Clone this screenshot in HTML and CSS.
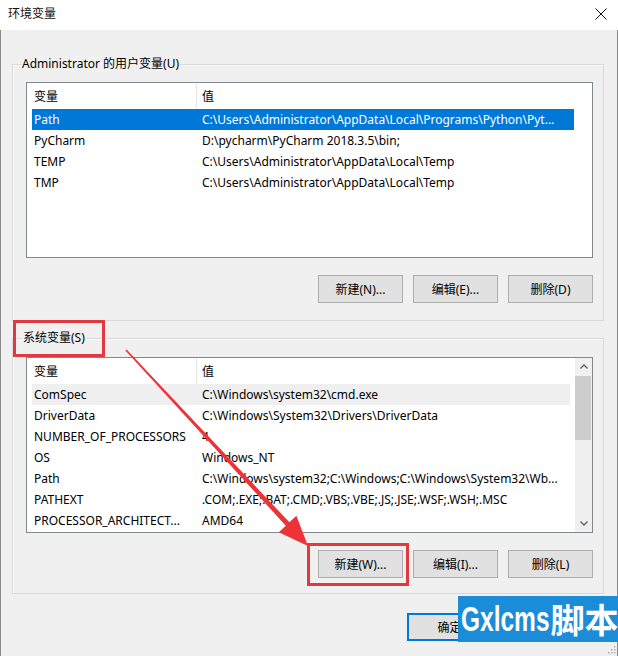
FILE: index.html
```html
<!DOCTYPE html>
<html lang="zh-CN">
<head>
<meta charset="utf-8">
<title>环境变量</title>
<link rel="stylesheet" href="styles.css">
</head>
<body>
<div class="window">
  <div class="titlebar">
    <span class="title">环境变量</span>
    <svg class="close" width="12" height="12" viewBox="0 0 12 12"><path d="M0.5 0.5 L11.5 11.5 M11.5 0.5 L0.5 11.5" stroke="#111" stroke-width="1" fill="none"/></svg>
  </div>
  <div class="content">
    <div class="group group-user">
      <span class="group-label">Administrator 的用户变量(U)</span>
      <div class="list">
        <div class="list-body">
          <div class="list-head"><span class="hcol1">变量</span><span class="hcol2">值</span></div>
          <div class="row selected"><span class="c1">Path</span><span class="c2">C:\Users\Administrator\AppData\Local\Programs\Python\Pyt...</span></div>
          <div class="row"><span class="c1">PyCharm</span><span class="c2">D:\pycharm\PyCharm 2018.3.5\bin;</span></div>
          <div class="row"><span class="c1">TEMP</span><span class="c2">C:\Users\Administrator\AppData\Local\Temp</span></div>
          <div class="row"><span class="c1">TMP</span><span class="c2">C:\Users\Administrator\AppData\Local\Temp</span></div>
        </div>
      </div>
      <div class="btns">
        <button class="btn">新建(N)...</button>
        <button class="btn">编辑(E)...</button>
        <button class="btn">删除(D)</button>
      </div>
    </div>

    <div class="group group-sys">
      <span class="group-label sys-label">系统变量(S)</span>
      <div class="list">
        <div class="list-body">
          <div class="list-head"><span class="hcol1">变量</span><span class="hcol2">值</span></div>
          <div class="row sys hot"><span class="c1">ComSpec</span><span class="c2">C:\Windows\system32\cmd.exe</span></div>
          <div class="row sys"><span class="c1">DriverData</span><span class="c2">C:\Windows\System32\Drivers\DriverData</span></div>
          <div class="row sys"><span class="c1">NUMBER_OF_PROCESSORS</span><span class="c2">4</span></div>
          <div class="row sys"><span class="c1">OS</span><span class="c2">Windows_NT</span></div>
          <div class="row sys"><span class="c1">Path</span><span class="c2">C:\Windows\system32;C:\Windows;C:\Windows\System32\Wb...</span></div>
          <div class="row sys"><span class="c1">PATHEXT</span><span class="c2">.COM;.EXE;.BAT;.CMD;.VBS;.VBE;.JS;.JSE;.WSF;.WSH;.MSC</span></div>
          <div class="row sys"><span class="c1">PROCESSOR_ARCHITECT...</span><span class="c2">AMD64</span></div>
        </div>
        <div class="scrollbar">
          <div class="sb-btn"><svg width="8" height="5" viewBox="0 0 8 5"><path d="M0.5 4.5 L4 1 L7.5 4.5" stroke="#606060" stroke-width="1.3" fill="none"/></svg></div>
          <div class="sb-thumb"></div>
          <div class="sb-space"></div>
          <div class="sb-btn"><svg width="8" height="5" viewBox="0 0 8 5"><path d="M0.5 0.5 L4 4 L7.5 0.5" stroke="#606060" stroke-width="1.3" fill="none"/></svg></div>
        </div>
      </div>
      <div class="btns">
        <button class="btn">新建(W)...</button>
        <button class="btn">编辑(I)...</button>
        <button class="btn">删除(L)</button>
      </div>
    </div>

    <div class="dialog-btns">
      <button class="btn default">确定</button>
      <button class="btn">取消</button>
    </div>
  </div>

  <div class="mark mark-label"></div>
  <div class="mark mark-new"></div>
  <svg class="arrow" width="618" height="656" viewBox="0 0 618 656">
    <polygon fill="#ee3338" points="125.4,350.5 285.8,525.7 278.8,532.2 308,546 296.4,515.8 289.4,522.3 126.6,349.5"/>
  </svg>
  <div class="watermark"><span class="wm-latin">Gxlcms</span><span class="wm-cjk">脚本</span></div>
  <svg class="grip" width="10" height="10" viewBox="0 0 10 10">
    <rect x="8" y="2" width="1.5" height="1.5" fill="#b0b0b0"/>
    <rect x="5" y="5" width="1.5" height="1.5" fill="#b0b0b0"/>
    <rect x="8" y="5" width="1.5" height="1.5" fill="#b0b0b0"/>
    <rect x="2" y="8" width="1.5" height="1.5" fill="#b0b0b0"/>
    <rect x="5" y="8" width="1.5" height="1.5" fill="#b0b0b0"/>
    <rect x="8" y="8" width="1.5" height="1.5" fill="#b0b0b0"/>
  </svg>
</div>
</body>
</html>
```
FILE: styles.css
```css
* { box-sizing: border-box; }
html, body { margin: 0; padding: 0; }
body {
  width: 618px;
  height: 656px;
  overflow: hidden;
  background: #f0f0f0;
  font-family: "Microsoft YaHei UI", "Noto Sans", "Noto Sans CJK SC", sans-serif;
  font-size: 12px;
  color: #000;
}
.window {
  position: relative;
  width: 618px;
  height: 656px;
  background: #f0f0f0;
}
.titlebar {
  height: 30px;
  background: #fff;
  display: flex;
  align-items: center;
  justify-content: space-between;
  padding: 0 11px 2px 8px;
}
.title { line-height: 16px; color: #111; }
.close { display: block; }

.content {
  height: 626px;
  border-left: 1px solid #8a8a8a;
  border-right: 1px solid #8a8a8a;
  padding: 34px 13px 0 11px;
}
.group {
  position: relative;
  border: 1px solid #d9d9d9;
  box-shadow: inset 1px 1px 0 #fafafa;
  padding: 17px 10px 17px 13px;
}
.group-sys {
  margin-top: 17px;
  padding-top: 18px;
  padding-bottom: 15px;
}
.group-label {
  position: absolute;
  top: -9px;
  left: 8px;
  padding: 0 1px;
  line-height: 16px;
  background: #f0f0f0;
  white-space: nowrap;
}
.sys-label { left: 9px; }

.list {
  height: 176px;
  background: #fff;
  border: 1px solid #828790;
  display: flex;
  overflow: hidden;
}
.list-body {
  flex: 1;
  min-width: 0;
}
.list-head {
  height: 26px;
  margin-left: 5px;
  display: grid;
  grid-template-columns: 165px 1fr;
  align-items: stretch;
}
.hcol1, .hcol2 { display: flex; align-items: center; }
.hcol1 { padding-left: 2px; border-right: 1px solid #e5e5e5; }
.hcol2 { padding-left: 5px; }
.row {
  height: 21px;
  width: 542px;
  margin-left: 5px;
  display: grid;
  grid-template-columns: 170px 1fr;
  align-items: center;
  white-space: nowrap;
}
.row.sys { width: 538px; }
.row .c1 { padding-left: 2px; overflow: hidden; }
.row .c2 { overflow: hidden; }
.row.selected { background: #0078d7; color: #fff; }
.row.hot { background: #efefef; }

.scrollbar {
  width: 17px;
  background: #f0f0f0;
  display: flex;
  flex-direction: column;
}
.sb-btn {
  height: 17px;
  display: flex;
  align-items: center;
  justify-content: center;
}
.sb-thumb {
  height: 64px;
  margin: 1px 1px 0 0;
  background: #cdcdcd;
}
.sb-space { flex: 1; }

.btns {
  display: flex;
  justify-content: flex-end;
  gap: 10px;
  margin-top: 17px;
}
.btn {
  width: 85px;
  height: 28px;
  padding: 0;
  background: #e1e1e1;
  border: 1px solid #adadad;
  font: inherit;
  color: #000;
}
.dialog-btns {
  display: flex;
  justify-content: flex-end;
  gap: 11px;
  margin-top: 19px;
  padding-right: 16px;
}
.btn.default {
  border: 1px solid #0078d7;
  box-shadow: inset 0 0 0 1px #0078d7;
}

.mark {
  position: absolute;
  border: 3px solid #e0393f;
}
.mark-label { left: 13px; top: 320px; width: 92px; height: 37px; }
.mark-new { left: 307px; top: 543px; width: 102px; height: 43px; }
.arrow { position: absolute; left: 0; top: 0; pointer-events: none; }

.watermark {
  position: absolute;
  left: 458px;
  top: 596px;
  width: 160px;
  height: 46px;
  background: #1a8cd8;
  color: #fff;
  font-weight: 700;
  display: flex;
  align-items: center;
  padding-left: 3px;
  overflow: hidden;
  white-space: nowrap;
}
.wm-latin {
  display: inline-block;
  font-family: "Liberation Sans", sans-serif;
  font-size: 35px;
  transform: scaleX(0.7);
  transform-origin: left center;
  margin-right: -37px;
}
.wm-cjk {
  font-family: "Noto Sans CJK SC", sans-serif;
  font-size: 34px;
  line-height: 1;
}
.grip { position: absolute; right: 2px; bottom: 2px; }
```
